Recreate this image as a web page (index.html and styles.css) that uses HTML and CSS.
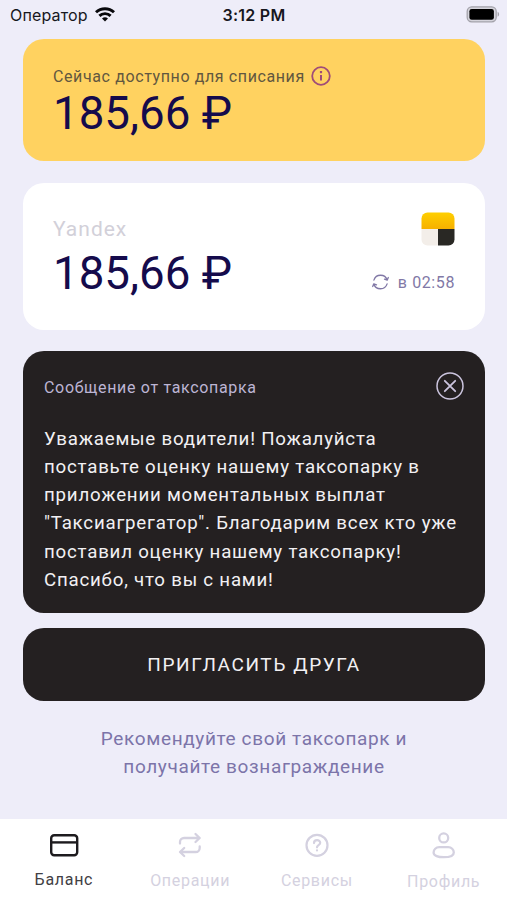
FILE: index.html
```html
<!DOCTYPE html>
<html lang="ru">
<head>
<meta charset="utf-8">
<title>Баланс</title>
<link rel="stylesheet" href="styles.css">
</head>
<body>
<div class="app">
  <header class="status">
    <div class="carrier"><span class="carrier-name">Оператор</span>
      <svg class="wifi" width="20" height="15" viewBox="0 0 20 15" fill="none" stroke="#08080c" stroke-width="2.9"><path d="M1 5.3a13 13 0 0 1 18 0M4.4 8.9a8 8 0 0 1 11.2 0"/><path d="M10 14.6l-3-3a4.3 4.3 0 0 1 6 0z" fill="#08080c" stroke="none"/></svg>
    </div>
    <span class="clock">3:12 PM</span>
    <svg class="battery" width="34" height="17" viewBox="0 0 34 17"><rect x="1.2" y=".8" width="29" height="15" rx="4.5" fill="#d5d4dc" stroke="#a3a2aa" stroke-width="1.3"/><rect x="3.4" y="3" width="24.5" height="10.7" rx="2.3" fill="#000"/><path d="M31.6 5.8c2 .8 2 4.2 0 5z" fill="#a3a2aa"/></svg>
  </header>
  <main class="content">
    <section class="card available">
      <div class="label-row"><span class="available-label">Сейчас доступно для списания</span>
        <svg width="20" height="20" viewBox="0 0 20 20" fill="none" stroke="#a04c78" stroke-width="1.8"><circle cx="10" cy="10" r="8.8"/><path d="M10 9v5.5" stroke-width="2"/><path d="M10 5v2.2" stroke-width="2.2"/></svg>
      </div>
      <div class="amount">185,66 ₽</div>
    </section>
    <section class="card account">
      <div class="account-main"><div class="account-name">Yandex</div><div class="amount">185,66 ₽</div></div>
      <div class="account-side">
        <svg class="brand" width="34" height="34" viewBox="0 0 34 34"><defs><clipPath id="tile"><rect x=".5" y=".5" width="33" height="33" rx="6"/></clipPath><linearGradient id="gold" x2="0" y2="1"><stop stop-color="#ffd000"/><stop offset="1" stop-color="#f6b000"/></linearGradient></defs><g clip-path="url(#tile)"><path d="M0 0h34v17H0z" fill="url(#gold)"/><path d="M0 17h17v17H0z" fill="#f3eee9"/><path d="M17 17h17v17H17z" fill="#292824"/></g></svg>
        <div class="updated">
          <svg width="17" height="16" viewBox="0 0 17 16" fill="none" stroke="#8178a6" stroke-width="1.3" stroke-linecap="round" stroke-linejoin="round"><path d="M1.9 6.1A7 7 0 0 1 15.2 6M15.1 9.9A7 7 0 0 1 1.8 10M16.3 3.5L15.2 6.2 12.5 5.2M.7 12.5L1.8 9.8l2.7 1"/></svg>
          <span>в 02:58</span>
        </div>
      </div>
    </section>
    <section class="card message">
      <div class="message-head"><h2>Сообщение от таксопарка</h2>
        <svg width="28" height="28" viewBox="0 0 28 28" fill="none" stroke="#cbc4de" stroke-width="1.5" stroke-linecap="round"><circle cx="14" cy="14" r="13"/><path d="M8.8 8.8l10.4 10.4M19.2 8.8L8.8 19.2" stroke-width="1.8"/></svg>
      </div>
      <p>Уважаемые водители! Пожалуйста<br>поставьте оценку нашему таксопарку в<br>приложении моментальных выплат<br>"Таксиагрегатор". Благодарим всех кто уже<br>поставил оценку нашему таксопарку!<br>Спасибо, что вы с нами!</p>
    </section>
    <button class="invite">ПРИГЛАСИТЬ ДРУГА</button>
    <p class="hint">Рекомендуйте свой таксопарк и<br>получайте вознаграждение</p>
  </main>
  <nav class="tabs">
    <a class="tab active">
      <svg width="32" height="28" viewBox="0 0 32 28" fill="none" stroke="#1d1b1e" stroke-width="2.4"><rect x="3.2" y="4.3" width="26" height="20" rx="3"/><path d="M3.2 11.4h26"/></svg>
      <span>Баланс</span></a>
    <a class="tab ops">
      <svg width="32" height="28" viewBox="0 0 32 28" fill="none" stroke="currentColor" stroke-width="2.3" stroke-linecap="round" stroke-linejoin="round"><path d="M6 12.5V11a4 4 0 0 1 4-4h15.5M21.5 3l4.2 4-4.2 4M25.7 15.5V17a4 4 0 0 1-4 4H6.2M10.2 17L6 21l4.2 4"/></svg>
      <span>Операции</span></a>
    <a class="tab services">
      <svg width="32" height="28" viewBox="0 0 32 28" fill="none" stroke="currentColor" stroke-width="2.2" stroke-linecap="round"><circle cx="16" cy="14.3" r="10.5"/><path d="M13 12.1c0-4 6.2-3.8 6.2-.3 0 2.5-3.2 2.2-3.2 4.5M16 19.3v.1"/></svg>
      <span>Сервисы</span></a>
    <a class="tab profile">
      <svg width="32" height="28" viewBox="0 0 32 28" fill="none" stroke="currentColor" stroke-width="2.3"><circle cx="15.7" cy="6.9" r="4.5"/><path d="M11.2 16.2h9c3.2 0 5.6 2.4 5.6 5.2 0 3.4-4.6 4.8-10.1 4.8S5.6 24.8 5.6 21.4c0-2.8 2.4-5.2 5.6-5.2z"/></svg>
      <span>Профиль</span></a>
  </nav>
</div>
</body>
</html>
```
FILE: styles.css
```css
* { box-sizing: border-box; }
body { margin: 0; font-family: Roboto, sans-serif; background: #eeedf9; }
h2, p { margin: 0; font-weight: 400; }
svg { display: block; flex: none; }
.app { width: 507px; height: 900px; display: flex; flex-direction: column; overflow: hidden; white-space: nowrap; }
.status { height: 39px; padding: 5px 7px 0 10px; display: grid; grid-template-columns: 1fr auto 1fr; align-items: start; font-family: Inter, sans-serif; font-size: 16px; line-height: 20px; color: #17171d; }
.carrier { display: flex; gap: 7px; }
.carrier-name { letter-spacing: .15px; }
.wifi { margin-top: 2px; }
.clock { font-weight: 600; letter-spacing: .25px; margin-right: 2px; }
.battery { justify-self: end; margin-top: 1px; }
.content { flex: 1; padding: 0 22px 0 23px; }
.card { border-radius: 21px; }
.available { height: 122px; padding: 26px 30px 0; background: #ffd260; }
.label-row { display: flex; gap: 6px; align-items: center; height: 21px; }
.available-label { font-size: 16px; letter-spacing: .61px; color: #62573f; padding-top: 1px; }
.amount { font-size: 45.7px; line-height: 56px; color: #150b4c; }
.account { height: 147px; margin-top: 22px; padding: 29px 30px 0; background: #fff; display: flex; justify-content: space-between; }
.account-name { font-size: 21px; line-height: 34px; letter-spacing: 1px; color: #d2d0d9; }
.account-side { display: flex; flex-direction: column; align-items: flex-end; }
.updated { display: flex; align-items: center; gap: 9px; margin-top: 26px; font-size: 16px; line-height: 22px; letter-spacing: .6px; color: #8178a6; }
.updated svg { margin-bottom: 2px; }
.message { height: 262px; margin-top: 21px; padding: 21px 21px 0 21px; background: #242021; }
.message-head { display: flex; justify-content: space-between; align-items: center; height: 28px; }
.message h2 { font-size: 16px; letter-spacing: .67px; color: #bdb5d4; padding-top: 2px; }
.message p { margin-top: 24.5px; font-size: 18.7px; line-height: 28.3px; letter-spacing: .78px; color: #f2f0f3; }
.invite { display: block; width: 100%; height: 73px; margin-top: 15px; padding: 0; border: 0; border-radius: 21px; background: #242021; color: #f2f0f3; font: 400 19px Roboto, sans-serif; letter-spacing: 1.6px; }
.hint { margin-top: 24px; text-align: center; font-size: 19px; line-height: 28.3px; letter-spacing: .63px; color: #7c74a9; }
.tabs { height: 81px; background: #fff; display: grid; grid-template-columns: repeat(4, 1fr); }
.tab { display: flex; flex-direction: column; align-items: center; padding-top: 12px; color: #d4d1e0; font-size: 16px; line-height: 20px; letter-spacing: .7px; }
.tab span { margin-top: 12px; }
.active { color: #424044; padding-left: 1px; }
.tab.active span { margin-top: 11px; }
.tab.profile span { margin-top: 13px; }
```
